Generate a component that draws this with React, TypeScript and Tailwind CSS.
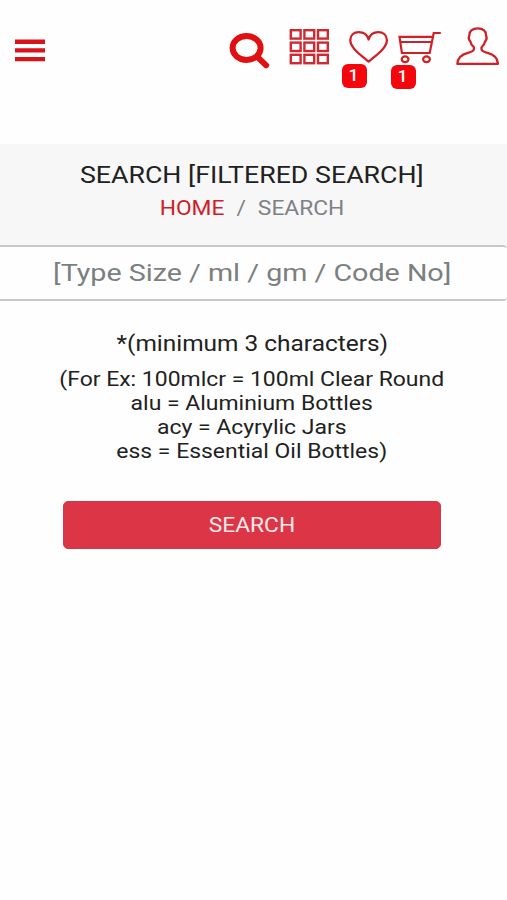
import type { ReactNode } from 'react';

function Badge({ children }: { children: ReactNode }) {
  return (
    <span className="flex h-6 w-[25px] items-center justify-center rounded-[6px] bg-[#f5050c] text-[16px] font-medium leading-none text-white">
      <span className="inline-block scale-x-[1.1]">{children}</span>
    </span>
  );
}

function MenuIcon() {
  return (
    <svg className="h-[40px] w-[32px]" viewBox="14 26 32 40" stroke="#d8131a" strokeWidth="4.4">
      <path d="M15 41.7H45M15 50.4H45M15 59.1H45" />
    </svg>
  );
}

function SearchIcon() {
  return (
    <svg className="h-[48px] w-[42px]" viewBox="229 26 42 48" fill="none" stroke="#e00f12">
      <ellipse cx="246.6" cy="48" rx="14" ry="11.9" strokeWidth="6" />
      <path d="M257.3 56.8L266.2 65.3" strokeWidth="6" strokeLinecap="round" />
    </svg>
  );
}

function GridIcon() {
  return (
    <svg className="h-[48px] w-[41px]" viewBox="289 26 41 48" fill="none" stroke="#cf2a32" strokeWidth="2.4">
      {[30.2, 42.6, 54.8].map((y) =>
        [290.8, 304.4, 318].map((x) => <rect key={`${x}-${y}`} x={x} y={y} width="9.8" height="8.4" />),
      )}
    </svg>
  );
}

function HeartIcon() {
  return (
    <svg className="h-[48px] w-[40px]" viewBox="348.5 26 40 48" fill="none" stroke="#d02027" strokeWidth="2.3" strokeLinejoin="round">
      <path d="M368.1 61.6C361 55.5 349.8 48 349.8 40.2C349.8 35.2 353.3 32.2 358.3 32.2C363 32.2 366.7 34.8 368.1 39.5C369.5 34.8 373 32.2 377.8 32.2C382.7 32.2 386.4 35.2 386.4 40.2C386.4 48 375.2 55.5 368.1 61.6Z" />
    </svg>
  );
}

function CartIcon() {
  return (
    <svg className="h-[48px] w-[44px]" viewBox="397.5 26 44 48" fill="none" stroke="#d02027" strokeWidth="2.2">
      <path d="M440.3 33H433.2L429.2 53H401.4L399 36.8H432.5M399.8 42H431.5" />
      <ellipse cx="404.6" cy="59.3" rx="3.4" ry="2.9" />
      <ellipse cx="426" cy="59.3" rx="3.4" ry="2.9" />
    </svg>
  );
}

function UserIcon() {
  return (
    <svg className="h-[48px] w-[43px]" viewBox="456 26 43 48" fill="none" stroke="#d02027" strokeWidth="2.3" strokeLinejoin="round">
      <path d="M457.4 63.9H497.9C497.7 58.5 494 54.6 487.5 52.9C482.6 51.8 480.9 50.2 481.6 47.2C483.6 45.2 484.7 43.4 485 41.6C486.8 39.8 487.1 37.8 486 35.8C486.5 31.3 483.2 28.3 477.8 28.3C472.4 28.3 468.9 31.3 469.4 35.8C468.3 37.8 468.6 39.8 470.4 41.6C470.7 43.4 471.7 45.2 473.8 47.2C474.5 50.2 472.8 51.8 467.9 52.9C461.4 54.6 457.6 58.5 457.4 63.9Z" />
    </svg>
  );
}

export default function App() {
  return (
    <div className="min-h-[900px] w-full overflow-hidden bg-[#fefefe] font-['Roboto',sans-serif] text-[#212121]">
      <header className="flex h-36 items-start pl-[14px] pt-[26px]">
        <button aria-label="Menu"><MenuIcon /></button>
        <nav className="ml-[183px] flex items-start">
          <button aria-label="Search"><SearchIcon /></button>
          <button aria-label="Categories" className="ml-[18px]"><GridIcon /></button>
          <button aria-label="Wishlist" className="relative ml-[18.5px]">
            <HeartIcon />
            <span className="absolute -left-[7px] top-[38px]"><Badge>1</Badge></span>
          </button>
          <button aria-label="Cart" className="relative ml-[9px]">
            <CartIcon />
            <span className="absolute -left-[7px] top-[39px]"><Badge>1</Badge></span>
          </button>
          <button aria-label="Account" className="ml-[14.5px]"><UserIcon /></button>
        </nav>
      </header>

      <section className="flex h-[101px] flex-col items-center bg-[#f7f7f7] pt-4 whitespace-nowrap">
        <h1 className="-ml-[3px] text-[23px] leading-8"><span className="inline-block scale-x-[1.163]">SEARCH [FILTERED SEARCH]</span></h1>
        <p className="-ml-[3px] text-[20px] leading-[33px] text-[#7d8286]">
          <span className="inline-block scale-x-[1.14]">
            <a className="text-[#cf202a]">HOME</a>
            <span className="mx-[10.5px]">/</span>
            <span>SEARCH</span>
          </span>
        </p>
      </section>

      <div className="flex h-14 items-center justify-center rounded-r-[4px] border-y-2 border-[#c8c8c8] whitespace-nowrap">
        <span className="-ml-[3px] inline-block scale-x-[1.17] pt-px text-[24.5px] text-[#7c7f80]">[Type Size / ml / gm / Code No]</span>
      </div>

      <main className="flex flex-col items-center whitespace-nowrap">
        <p className="-ml-[3px] mt-[27px] text-[22px] leading-8"><span className="inline-block scale-x-[1.11]">*(minimum 3 characters)</span></p>
        <p className="-ml-[3px] mt-[7px] text-center text-[20px] leading-6">
          <span className="inline-block scale-x-[1.147]">
            (For Ex: 100mlcr = 100ml Clear Round<br />
            alu = Aluminium Bottles<br />
            acy = Acyrylic Jars<br />
            ess = Essential Oil Bottles)
          </span>
        </p>
        <button className="-ml-[3px] mt-[38px] h-12 w-[378px] rounded-[5px] border border-[#c93a4c] bg-[#dc3546] text-[20px] text-[#fbe9ea]">
          <span className="inline-block scale-x-[1.14]">SEARCH</span>
        </button>
      </main>
    </div>
  );
}
